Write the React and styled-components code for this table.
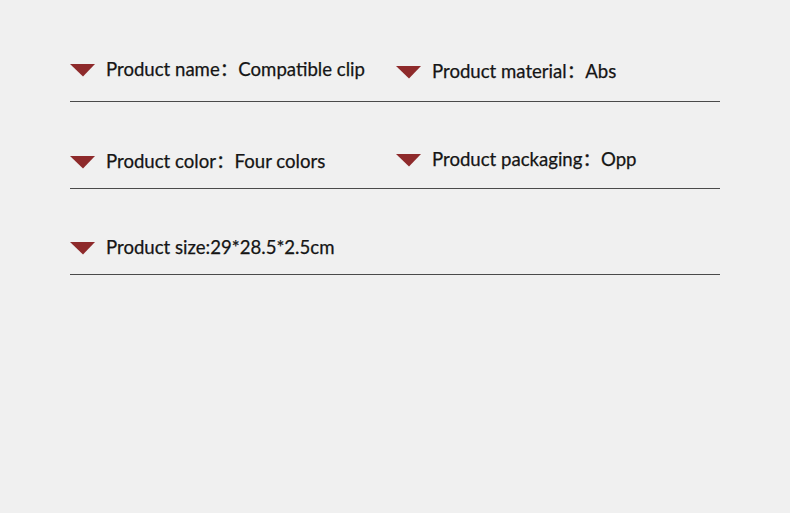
import React from "react";
import styled, { createGlobalStyle } from "styled-components";

const Global = createGlobalStyle`
  html, body { margin: 0; padding: 0; background: #f0f0f0; }
  body { font-family: Lato, "Noto Sans CJK SC", sans-serif; }
`;

const Page = styled.div`
  width: 790px;
  height: 513px;
  background: #f0f0f0;
  padding: 15px 0 0 70px;
  box-sizing: border-box;
`;

const Table = styled.div`
  width: 650px;
  display: flex;
  flex-direction: column;
`;

const Row = styled.div`
  display: grid;
  grid-template-columns: 326px 1fr;
  align-items: end;
  height: ${(p) => p.$h}px;
  box-sizing: border-box;
  border-bottom: 1px solid #4a4a4a;
  padding-bottom: ${(p) => p.$pad}px;
`;

const Cell = styled.div`
  display: flex;
  align-items: center;
  gap: 11px;
  transform: translateY(${(p) => p.$dy || 0}px);
`;

const Marker = styled.svg`
  width: 25px;
  height: 13px;
  flex: none;
  margin-top: 2px;
`;

const Label = styled.span`
  font-size: 18.6px;
  line-height: 22px;
  color: #151515;
  white-space: nowrap;
  -webkit-text-stroke: 0.25px #151515;
`;

const Arrow = () => (
  <Marker viewBox="0 0 25 13">
    <path d="M0 0 H25 L13 12.5 Z" fill="#8e2a2b" />
  </Marker>
);

const Item = ({ children, dy }) => (
  <Cell $dy={dy}>
    <Arrow />
    <Label>{children}</Label>
  </Cell>
);

export default function App() {
  return (
    <>
      <Global />
      <Page>
        <Table>
          <Row $h={87} $pad={21}>
            <Item>Product name：Compatible clip</Item>
            <Item dy={2}>Product material：Abs</Item>
          </Row>
          <Row $h={87} $pad={16}>
            <Item>Product color：Four colors</Item>
            <Item dy={-2}>Product packaging：Opp</Item>
          </Row>
          <Row $h={86} $pad={16}>
            <Item>Product size:29*28.5*2.5cm</Item>
          </Row>
        </Table>
      </Page>
    </>
  );
}
